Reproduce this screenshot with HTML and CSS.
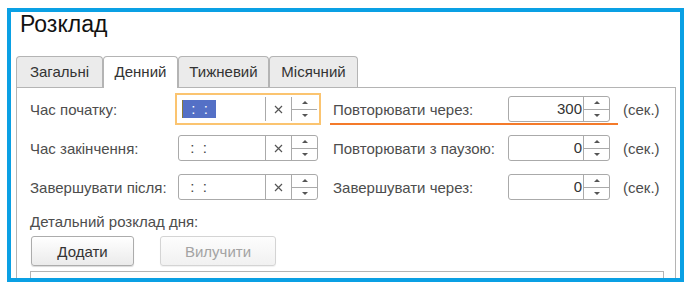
FILE: index.html
```html
<!DOCTYPE html>
<html lang="uk">
  <head>
    <meta charset="UTF-8" />
    <title>Розклад</title>
    <link rel="stylesheet" href="styles.css">
  </head>
  <body>
    <div class="frame">
      <h1 class="title">Розклад</h1>
      <div class="tabs">
        <div class="tab t-general">Загальні</div>
        <div class="tab t-daily active">Денний</div>
        <div class="tab t-weekly">Тижневий</div>
        <div class="tab t-monthly">Місячний</div>
      </div>
      <div class="panel">
        <div class="row">
          <span class="label">Час початку:</span>
          <div class="field time focused">
            <span class="value"><span class="sel">  :  :  </span></span>
            <span class="clear"><svg width="9" height="9" viewBox="0 0 9 9"><path d="M1 1L8 8M8 1L1 8" stroke="#555" stroke-width="1.2"/></svg></span>
            <span class="spin"><i class="up"></i><i class="down"></i></span>
          </div>
          <div class="pair current">
            <span class="label">Повторювати через:</span>
            <div class="field num">
              <span class="value">300</span>
              <span class="spin"><i class="up"></i><i class="down"></i></span>
            </div>
            <span class="unit">(сек.)</span>
          </div>
        </div>
        <div class="row">
          <span class="label">Час закінчення:</span>
          <div class="field time">
            <span class="value">  :  :  </span>
            <span class="clear"><svg width="9" height="9" viewBox="0 0 9 9"><path d="M1 1L8 8M8 1L1 8" stroke="#555" stroke-width="1.2"/></svg></span>
            <span class="spin"><i class="up"></i><i class="down"></i></span>
          </div>
          <div class="pair">
            <span class="label">Повторювати з паузою:</span>
            <div class="field num">
              <span class="value">0</span>
              <span class="spin"><i class="up"></i><i class="down"></i></span>
            </div>
            <span class="unit">(сек.)</span>
          </div>
        </div>
        <div class="row">
          <span class="label">Завершувати після:</span>
          <div class="field time">
            <span class="value">  :  :  </span>
            <span class="clear"><svg width="9" height="9" viewBox="0 0 9 9"><path d="M1 1L8 8M8 1L1 8" stroke="#555" stroke-width="1.2"/></svg></span>
            <span class="spin"><i class="up"></i><i class="down"></i></span>
          </div>
          <div class="pair">
            <span class="label">Завершувати через:</span>
            <div class="field num">
              <span class="value">0</span>
              <span class="spin"><i class="up"></i><i class="down"></i></span>
            </div>
            <span class="unit">(сек.)</span>
          </div>
        </div>
        <div class="caption">Детальний розклад дня:</div>
        <div class="buttons">
          <button class="btn">Додати</button>
          <button class="btn" disabled>Вилучити</button>
        </div>
        <div class="list"></div>
      </div>
    </div>
  </body>
</html>
```

FILE: styles.css
```css
body {
  margin: 0;
  background: #fff;
  font-family: "Liberation Sans", Arial, sans-serif;
}

.frame {
  box-sizing: border-box;
  width: 677px;
  height: 274px;
  margin: 8px 0 0 7px;
  padding: 0 0 0 5px;
  border: 4px solid #0aa0e4;
  overflow: hidden;
}

.title {
  margin: 0 0 20px 4px;
  font-size: 23px;
  line-height: 24px;
  font-weight: normal;
  color: #111;
}

.tabs {
  display: flex;
  align-items: flex-start;
  height: 31px;
}

.tab {
  box-sizing: border-box;
  height: 31px;
  border: 1px solid #b4b4b4;
  border-bottom: none;
  border-radius: 4px 4px 0 0;
  background: #ebebeb;
  color: #333;
  font-size: 15px;
  line-height: 30px;
  text-align: center;
}

.t-general { width: 87px; }
.t-daily { width: 75px; }
.t-weekly { width: 91px; }
.t-monthly { width: 89px; }

.tab.active {
  height: 32px;
  background: #fff;
  position: relative;
  z-index: 1;
}

.panel {
  box-sizing: border-box;
  width: 660px;
  height: 260px;
  padding: 8px 0 0 13px;
  border: 1px solid #b4b4b4;
}

.row {
  display: flex;
  align-items: center;
  height: 26px;
  margin-bottom: 13px;
  font-size: 15px;
  color: #4d4d4d;
}

.label {
  width: 148px;
  white-space: nowrap;
}

.field {
  box-sizing: border-box;
  display: flex;
  height: 26px;
  border: 1px solid #aaa;
  border-radius: 3px;
  background: #fff;
}

.field .value {
  flex-grow: 1;
  white-space: pre;
  line-height: 24px;
  color: #444;
}

.time {
  width: 140px;
}

.time .value {
  padding-left: 3px;
}

.focused {
  border-color: #fff;
  border-radius: 0;
  outline: 2px solid #fbc470;
  outline-offset: 1px;
}

.sel {
  display: inline-block;
  height: 18px;
  margin-top: 3px;
  line-height: 18px;
  background: #5470c6;
  border-left: 1px solid #8a7a3a;
  color: #fff;
  vertical-align: top;
}

.clear {
  width: 25px;
  display: flex;
  align-items: center;
  justify-content: center;
  border-left: 1px solid #aaa;
}

.spin {
  width: 25px;
  display: flex;
  flex-direction: column;
  border-left: 1px solid #aaa;
}

.spin i {
  flex: 1;
  display: flex;
  align-items: center;
  justify-content: center;
}

.spin i::before {
  content: "";
  border-left: 3px solid transparent;
  border-right: 3px solid transparent;
}

.spin .up {
  border-bottom: 1px solid #aaa;
}

.spin .up::before {
  border-bottom: 3px solid #555;
}

.spin .down::before {
  border-top: 3px solid #555;
}

.pair {
  display: flex;
  align-items: center;
  height: 26px;
  margin-left: 12px;
  padding-left: 3px;
  position: relative;
}

.pair .label {
  width: 175px;
}

.num {
  width: 102px;
}

.num .value {
  text-align: right;
  padding-right: 1px;
  color: #333;
}

.unit {
  margin-left: 13px;
}

.pair.current::after {
  content: "";
  position: absolute;
  left: 0;
  right: 42px;
  bottom: -3px;
  height: 2px;
  background: #f47a2a;
}

.caption {
  font-size: 15px;
  line-height: 18px;
  color: #4d4d4d;
}

.buttons {
  display: flex;
  gap: 26px;
  margin: 5px 0 5px 1px;
}

.btn {
  height: 30px;
  padding: 0;
  border: 1px solid #acacac;
  border-radius: 3px;
  background: linear-gradient(#fff, #ebebeb);
  box-shadow: 0 1px 1px rgba(0, 0, 0, 0.15);
  font-family: inherit;
  font-size: 15px;
  color: #333;
  width: 103px;
}

.btn:disabled {
  width: 116px;
  border-color: #d4d4d4;
  background: linear-gradient(#fdfdfd, #f1f1f1);
  color: #a3a3a3;
  box-shadow: 0 1px 1px rgba(0, 0, 0, 0.06);
}

.list {
  width: 632px;
  height: 80px;
  border: 1px solid #b4b4b4;
}
```
